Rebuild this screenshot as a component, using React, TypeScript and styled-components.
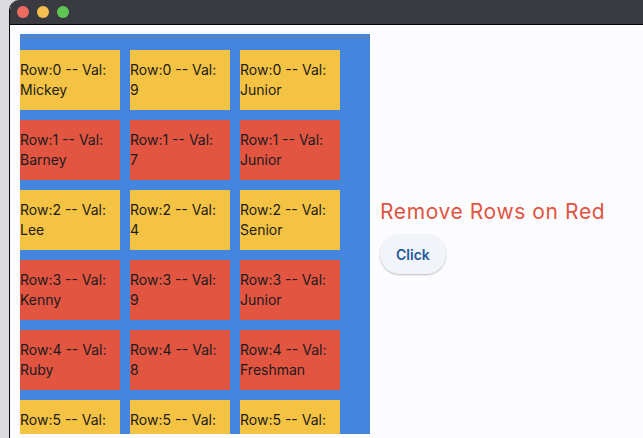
import { createGlobalStyle, styled } from 'styled-components';

const GlobalStyle = createGlobalStyle`
  html, body {
    margin: 0;
    padding: 0;
    width: 643px;
    height: 438px;
    overflow: hidden;
    background: linear-gradient(90deg, #dcdcde 0%, #c0c1c5 100%);
    font-family: Inter, "Noto Sans", sans-serif;
  }
`

interface Student {
  name: string;
  score: number;
  level: string;
  red: boolean;
}

const students: Student[] = [
  { name: 'Mickey', score: 9, level: 'Junior', red: false },
  { name: 'Barney', score: 7, level: 'Junior', red: true },
  { name: 'Lee', score: 4, level: 'Senior', red: false },
  { name: 'Kenny', score: 9, level: 'Junior', red: true },
  { name: 'Ruby', score: 8, level: 'Freshman', red: true },
  { name: 'Dolly', score: 6, level: 'Sophomore', red: false },
]

const App = () => {
  return (
    <>
      <GlobalStyle />
      <Window>
        <TitleBar>
          <Light color='#ec6a5e' />
          <Light color='#f4bf4f' />
          <Light color='#61c554' />
        </TitleBar>
        <Content>
          <Panel>
            <Grid>
              {
                students.map((s, i) => (
                  [s.name, String(s.score), s.level].map((val, j) => (
                    <Cell key={`${i}-${j}`} $red={s.red}>
                      {`Row:${i} -- Val:\n${val}`}
                    </Cell>
                  ))
                ))
              }
            </Grid>
          </Panel>
          <Side>
            <Heading>Remove Rows on Red</Heading>
            <ClickButton>Click</ClickButton>
          </Side>
        </Content>
      </Window>
    </>
  );
};

export default App;

const Window = styled.div`
  position: relative;
  margin-left: 9px;
  width: 634px;
  height: 438px;
  border-left: 1px solid #0a0a0a;
  border-top-left-radius: 10px;
  background: #fcfcff;
  display: flex;
  flex-direction: column;
  overflow: hidden;
`

const TitleBar = styled.div`
  height: 24px;
  flex: none;
  background: #3a3b40;
  border-bottom: 1px solid #050505;
  display: flex;
  align-items: center;
  gap: 8px;
  padding-left: 7px;
`

const Light = styled.span<{ color: string }>`
  width: 12px;
  height: 12px;
  border-radius: 50%;
  background: ${(p) => p.color};
`

const Content = styled.div`
  flex: 1;
  display: flex;
  align-items: flex-start;
  padding: 9px 0 0 10px;
  min-height: 0;
`

const Panel = styled.div`
  width: 350px;
  height: 384px;
  flex: none;
  background: #4486dd;
  border-top: 2px solid #4486dd;
  box-shadow: inset 0 1px 0 #767d88;
  padding-top: 14px;
  overflow: hidden;
`

const Grid = styled.div`
  display: grid;
  grid-template-columns: repeat(3, 100px);
  grid-auto-rows: 60px;
  column-gap: 10px;
  row-gap: 10px;
`

const Cell = styled.div<{ $red: boolean }>`
  background: ${(p) => (p.$red ? '#e15541' : '#f4c343')};
  color: #1d1b1e;
  font-size: 14px;
  line-height: 20px;
  white-space: pre-line;
  display: flex;
  align-items: center;
`

const Side = styled.div`
  align-self: center;
  margin-left: 10px;
  margin-top: 0;
  display: flex;
  flex-direction: column;
  align-items: flex-start;
  gap: 8px;
`

const Heading = styled.div`
  color: #e05441;
  font-size: 21px;
  letter-spacing: 0.6px;
  line-height: 28px;
`

const ClickButton = styled.button`
  height: 40px;
  padding: 0 16px;
  border: none;
  border-radius: 20px;
  background: #f1f4f9;
  color: #24599c;
  font-family: Inter, "Noto Sans", sans-serif;
  font-size: 14px;
  font-weight: 600;
  box-shadow: 0 1px 2px rgba(0, 0, 0, 0.25);
  cursor: pointer;
`
